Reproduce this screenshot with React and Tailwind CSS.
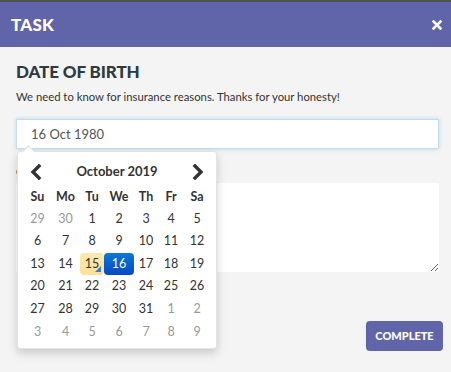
import React from 'react'

const font = { fontFamily: 'Lato, "Open Sans", sans-serif' }

const weeks = [
    [[29, 'old'], [30, 'old'], [1], [2], [3], [4], [5]],
    [[6], [7], [8], [9], [10], [11], [12]],
    [[13], [14], [15, 'today'], [16, 'active'], [17], [18], [19]],
    [[20], [21], [22], [23], [24], [25], [26]],
    [[27], [28], [29], [30], [31], [1, 'new'], [2, 'new']],
    [[3, 'new'], [4, 'new'], [5, 'new'], [6, 'new'], [7, 'new'], [8, 'new'], [9, 'new']],
]

const cols = 'grid grid-cols-[27px_29px_24px_30px_24px_26px_26px]'

function Chevron({ dir }) {
    return (
        <svg width="12" height="16" viewBox="0 0 12 16" className="text-[#333]">
            <polyline
                points={dir === 'left' ? '9,2 3,8 9,14' : '3,2 9,8 3,14'}
                fill="none"
                stroke="currentColor"
                strokeWidth="3.4"
                strokeLinecap="square"
            />
        </svg>
    )
}

function DayCell({ day, kind }) {
    if (kind === 'today') {
        return (
            <div className="relative h-[22px] flex items-center justify-center rounded-[4px] bg-[linear-gradient(#fde9b0,#fde19a)] text-[#333]">
                {day}
                <span className="absolute right-[3px] bottom-[3px] w-0 h-0 border-l-[6px] border-l-transparent border-b-[6px] border-b-[#3b7dc9]" />
            </div>
        )
    }
    if (kind === 'active') {
        return (
            <div className="h-[22px] flex items-center justify-center rounded-[4px] bg-[linear-gradient(#0a7ad2,#0848c4)] text-white">
                {day}
            </div>
        )
    }
    return (
        <div className={`h-[22px] flex items-center justify-center ${kind ? 'text-[#999]' : 'text-[#333]'}`}>
            {day}
        </div>
    )
}

function Calendar() {
    return (
        <div className="absolute left-[1px] top-[32px] z-10 w-[200px] bg-white rounded-[3px] border border-[#e3e3e3] shadow-[0_4px_10px_rgba(0,0,0,0.18)] px-[6px] pt-[10px] pb-[5px]">
            {/* caret */}
            <div className="absolute -top-[5px] left-[6px] w-[9px] h-[9px] bg-white border-l border-t border-[#dcdcdc] rotate-45" />

            <div className="relative flex items-center justify-between px-[6px] h-[20px]">
                <Chevron dir="left" />
                <span className="text-[13px] font-bold text-[#333]">October 2019</span>
                <Chevron dir="right" />
            </div>

            <div className={`${cols} mt-[4px] text-[12.5px] font-bold text-[#333] text-center`}>
                {['Su', 'Mo', 'Tu', 'We', 'Th', 'Fr', 'Sa'].map((d) => (
                    <div key={d} className="h-[22px] flex items-center justify-center">{d}</div>
                ))}
            </div>

            <div className="flex flex-col gap-[0.6px] text-[12.5px]">
                {weeks.map((w, i) => (
                    <div key={i} className={cols}>
                        {w.map(([d, k], j) => (
                            <DayCell key={j} day={d} kind={k} />
                        ))}
                    </div>
                ))}
            </div>
        </div>
    )
}

export default function App() {
    return (
        <div className="min-h-[372px] bg-[#f4f4f4]" style={font}>
            <div className="h-[2px] bg-[#505050]" />
            <header className="h-[45px] bg-[#6065aa] flex items-center justify-between pl-[11px] pr-[9px]">
                <h1 className="text-[17px] font-black text-white tracking-[0.2px]">TASK</h1>
                <svg width="10" height="10" viewBox="0 0 10 10" className="text-white">
                    <path d="M1.5 1.5 L8.5 8.5 M8.5 1.5 L1.5 8.5" stroke="currentColor" strokeWidth="2.6" strokeLinecap="square" />
                </svg>
            </header>

            <main className="pl-4 pr-3 pt-[13px]">
                <h2 className="text-[17px] leading-[24px] font-black text-[#2d3a42] tracking-[-0.1px]">DATE OF BIRTH</h2>
                <p className="mt-[4px] text-[11.3px] leading-[18px] text-[#333]">
                    We need to know for insurance reasons. Thanks for your honesty!
                </p>

                <div className="relative mt-[13px]">
                    <input
                        readOnly
                        value="16 Oct 1980"
                        className="w-full h-[30px] bg-white border border-[#c4dcf0] shadow-[0_0_4px_rgba(102,175,233,0.45)] px-[14px] text-[13px] text-[#555] outline-none"
                        style={font}
                    />
                    <Calendar />
                </div>

                <label className="block mt-[15px] text-[12px] leading-[16px] font-bold text-[#333]">Comments</label>
                <textarea
                    readOnly
                    className="block w-full h-[89px] mt-[3px] bg-white border-0 outline-none resize-y"
                />

                <div className="flex justify-end mt-[49px] -mr-1">
                    <button className="h-[30px] w-[77px] rounded-[4px] bg-[#6065aa] text-white text-[11px] font-black" style={font}>
                        COMPLETE
                    </button>
                </div>
            </main>
        </div>
    )
}
